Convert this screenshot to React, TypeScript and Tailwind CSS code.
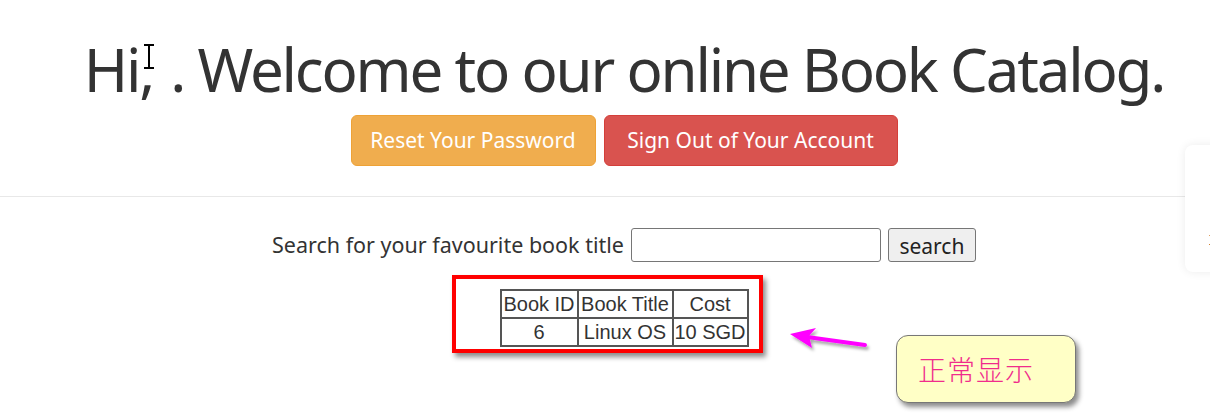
import React from "react";

export default function App() {
  const sans = { fontFamily: '"Noto Sans", "Open Sans", sans-serif' };
  return (
    <div className="relative w-[1210px] h-[420px] overflow-hidden bg-white text-[#333]" style={sans}>
      <div className="flex flex-col items-center pl-[38px]">
        <h1 className="mt-[29px] text-[60px] leading-[80px] font-normal whitespace-pre tracking-[-2.2px]">
          Hi,<span className="inline-block w-[17px]" />. Welcome to our online Book Catalog.
        </h1>
        <div className="flex gap-2 mt-[6px]">
          <button className="h-[51px] w-[245px] rounded-[6px] bg-[#f0ad4e] border border-[#eea236] text-white text-[21px]">
            Reset Your Password
          </button>
          <button className="h-[51px] w-[294px] rounded-[6px] bg-[#d9534f] border border-[#d43f3a] text-white text-[21px]">
            Sign Out of Your Account
          </button>
        </div>
      </div>
      <div className="mt-[30px] h-px w-[1185px] bg-[#e8e8e8]" />

      <div className="flex flex-col items-center pl-[38px]">
        <div className="mt-[31px] flex items-center gap-[7px] text-[21.5px]">
          <span>Search for your favourite book title</span>
          <input className="h-[34px] w-[250px] rounded-[3px] border border-[#767676] bg-white" />
          <button className="h-[34px] w-[88px] rounded-[3px] border border-[#767676] bg-[#efefef] text-[21px] text-[#222] pt-[2px]">
            search
          </button>
        </div>

        <div className="relative mt-[27px]">
          <table
            className="border-separate border-spacing-0 border border-[#555] text-[20px] text-[#333] leading-[26px]"
            style={{ fontFamily: '"Liberation Sans", Arial, sans-serif' }}
          >
            <thead>
              <tr>
                <th className="border border-[#555] font-normal px-0 w-[77px]">Book ID</th>
                <th className="border border-[#555] font-normal px-0 w-[95px]">Book Title</th>
                <th className="border border-[#555] font-normal px-0 w-[75px]">Cost</th>
              </tr>
            </thead>
            <tbody>
              <tr>
                <td className="border border-[#555] text-center">6</td>
                <td className="border border-[#555] text-center">Linux OS</td>
                <td className="border border-[#555] text-center">10 SGD</td>
              </tr>
            </tbody>
          </table>
          <div className="absolute left-[-48px] top-[-14px] w-[311px] h-[78px] border-[4px] border-[#ff0000] shadow-[3px_4px_5px_rgba(0,0,0,0.45)] pointer-events-none" />
        </div>
      </div>

      {/* right edge card */}
      <div className="absolute left-[1185px] top-[145px] w-[60px] h-[127px] rounded-[8px] bg-white shadow-[0_0_10px_rgba(0,0,0,0.08)]">
        <div className="absolute left-[24px] top-[90px] w-px h-px bg-[#e0a060]" />
        <div className="absolute left-[24px] top-[99px] w-px h-px bg-[#d08030]" />
      </div>

      {/* I-beam cursor */}
      <svg className="absolute left-[143px] top-[44px]" width="12" height="25" viewBox="0 0 12 25">
        <path d="M1 1 H11 M6 1 V24 M1 24 H11" stroke="#000" strokeWidth="2" fill="none" />
      </svg>

      {/* arrow */}
      <svg className="absolute left-[785px] top-[322px]" width="95" height="40" viewBox="0 0 95 40">
        <defs>
          <filter id="sh" x="-20%" y="-50%" width="140%" height="200%">
            <feDropShadow dx="2" dy="3" stdDeviation="1.5" floodColor="#000" floodOpacity="0.35" />
          </filter>
        </defs>
        <g filter="url(#sh)">
          <path d="M22 15 L80 23" stroke="#ff00ff" strokeWidth="4" strokeLinecap="round" />
          <path d="M5 12 L31 6 L24 14 L27 26 Z" fill="#ff00ff" />
        </g>
      </svg>

      {/* callout */}
      <div className="absolute left-[896px] top-[335px] w-[180px] h-[68px] rounded-[12px] bg-[#ffffc6] border border-[#777] shadow-[3px_4px_5px_rgba(0,0,0,0.45)] flex items-center pl-[21px]">
        <span
          className="text-[28px] text-[#f02c8c] tracking-[1px]"
          style={{ fontFamily: '"Noto Sans CJK SC", sans-serif', fontWeight: 300 }}
        >
          正常显示
        </span>
      </div>
    </div>
  );
}
